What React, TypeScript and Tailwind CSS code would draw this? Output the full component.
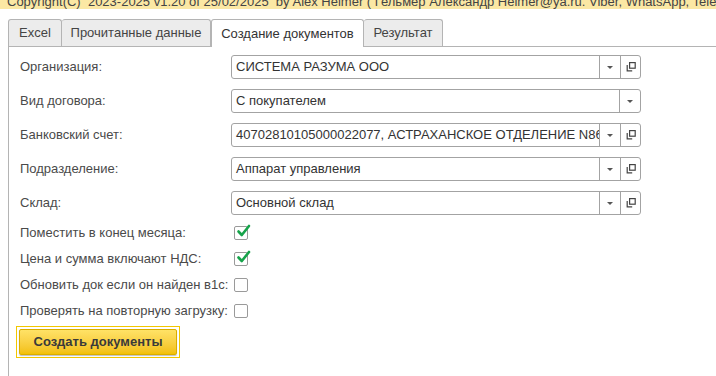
import React from 'react';

const tabs = [
  { name: 'Excel', w: 'w-[54px]' },
  { name: 'Прочитанные данные', w: 'w-[149px]' },
  { name: 'Создание документов', w: 'w-[153px]' },
  { name: 'Результат', w: 'w-[79px]' },
];

const fields = [
  { label: 'Организация:', value: 'СИСТЕМА РАЗУМА ООО', open: true },
  { label: 'Вид договора:', value: 'С покупателем', open: false },
  { label: 'Банковский счет:', value: '40702810105000022077, АСТРАХАНСКОЕ ОТДЕЛЕНИЕ N8625 ПАО СБЕРБАНК', open: true },
  { label: 'Подразделение:', value: 'Аппарат управления', open: true },
  { label: 'Склад:', value: 'Основной склад', open: true },
];

const checks = [
  { label: 'Поместить в конец месяца:', on: true },
  { label: 'Цена и сумма включают НДС:', on: true },
  { label: 'Обновить док если он найден в1с:', on: false },
  { label: 'Проверять на повторную загрузку:', on: false },
];

const Arrow = () => (
  <svg width="6" height="3" viewBox="0 0 6 3">
    <polygon points="0,0 6,0 3,3" fill="#555" />
  </svg>
);

const OpenIcon = () => (
  <svg width="10" height="10" viewBox="0 0 10 10" fill="none" stroke="#444" strokeWidth="1.2">
    <rect x="3.6" y="0.6" width="5.6" height="5.6" />
    <path d="M1.2 3 V8.8 H6.2" />
  </svg>
);

const Field = ({ value, open }: { value: string; open: boolean }) => (
  <div className="flex h-[24px] w-[410px] items-stretch rounded-[3px] border border-[#a3a3a3] bg-white">
    <div className="flex min-w-0 flex-1 items-center overflow-hidden whitespace-nowrap pl-[4px] text-[13px] text-[#333]">
      <span className="truncate-none">{value}</span>
    </div>
    {open ? (
      <>
        <div className="flex w-[21px] items-center justify-center border-l border-[#a3a3a3]">
          <Arrow />
        </div>
        <div className="flex w-[20px] items-center justify-center border-l border-[#a3a3a3]">
          <OpenIcon />
        </div>
      </>
    ) : (
      <div className="ml-[20px] flex w-[21px] items-center justify-center border-l border-[#a3a3a3]">
        <Arrow />
      </div>
    )}
  </div>
);

const CheckBox = ({ on }: { on: boolean }) => (
  <div className="relative h-[14px] w-[14px] rounded-[2px] border border-[#9a9a9a] bg-white">
    {on && (
      <svg className="absolute left-[1px] top-[-3px]" width="15" height="14" viewBox="0 0 15 14" fill="none">
        <path d="M2.5 7.5 L5.8 11 L13 2" stroke="#16a34a" strokeWidth="2.6" strokeLinecap="round" strokeLinejoin="round" />
      </svg>
    )}
  </div>
);

export default function App() {
  return (
    <div className="flex h-[376px] w-[716px] flex-col overflow-hidden bg-white font-['Liberation_Sans',Arial,sans-serif] text-[13px] text-[#4a4a4a]">
      <div className="h-[9px] overflow-hidden bg-[#fbe8a4]">
        <div className="-mt-[5px] whitespace-nowrap pl-[7px] text-[13px] leading-[13px] text-[#444]">
          Copyright(C)&nbsp; 2023-2025 v1.20 of 25/02/2025&nbsp; by Alex Helmer ( Гельмер Александр Helmer@ya.ru. Viber, WhatsApp, Tele
        </div>
      </div>

      <div className="ml-[8px] mt-[10px] flex h-[28px] items-end border-b border-[#b4b4b4]">
        {tabs.map((t, i) =>
          i === 2 ? (
            <div
              key={t.name}
              className={`-mb-px flex h-[28px] ${t.w} items-center justify-center whitespace-nowrap rounded-t-[3px] border border-b-0 border-[#b4b4b4] bg-white text-[#333]`}
            >
              {t.name}
            </div>
          ) : (
            <div
              key={t.name}
              className={`flex h-[27px] ${t.w} items-center justify-center whitespace-nowrap rounded-t-[3px] border border-b-0 border-[#b4b4b4] bg-[#ececec] text-[#444] ${i === 1 ? 'border-l-0' : ''} ${i === 3 ? 'border-l-0' : ''}`}
            >
              {t.name}
            </div>
          )
        )}
      </div>

      <div className="ml-[8px] flex flex-1 flex-col border-l border-[#b4b4b4] pl-[11px] pt-[8px]">
        <div className="flex flex-col gap-[10px]">
          {fields.map((f) => (
            <div key={f.label} className="flex h-[24px] items-center">
              <div className="w-[211px]">{f.label}</div>
              <Field value={f.value} open={f.open} />
            </div>
          ))}
        </div>

        <div className="mt-[5px] flex flex-col">
          {checks.map((c) => (
            <div key={c.label} className="flex h-[26px] items-center">
              <div className="w-[214px] whitespace-nowrap">{c.label}</div>
              <CheckBox on={c.on} />
            </div>
          ))}
        </div>

        <div className="-ml-[4px] mt-[2px] w-[164px] border border-[#f2c700] p-[2px]">
          <button className="flex h-[26px] w-full items-center justify-center rounded-[2px] border border-[#d9ad00] bg-gradient-to-b from-[#ffe266] to-[#f3c000] text-[13px] font-bold text-[#3a3a3a] shadow-[0_1px_1px_rgba(0,0,0,0.25)]">
            Создать документы
          </button>
        </div>
      </div>
    </div>
  );
}
